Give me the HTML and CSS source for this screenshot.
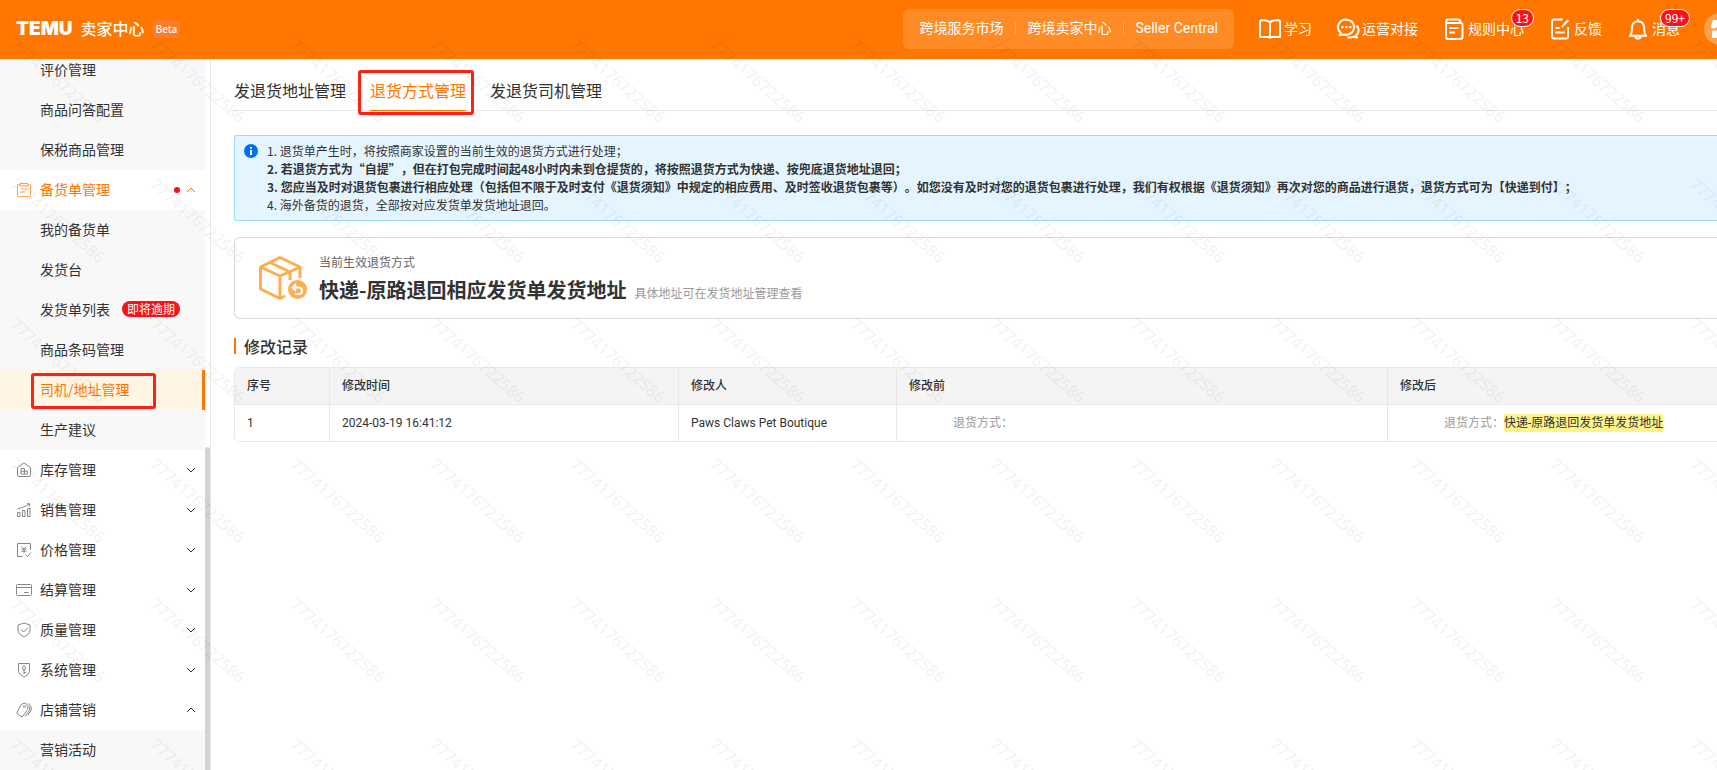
FILE: index.html
```html
<!DOCTYPE html>
<html lang="zh-CN">
<head>
<meta charset="utf-8">
<meta name="viewport" content="width=device-width, initial-scale=1">
<title>TEMU 卖家中心</title>
<link rel="stylesheet" href="styles.css">
</head>
<body>
<header class="topbar">
  <a class="brand" href="#">
    <span class="brand-logo">TEMU</span>
    <span class="brand-name">卖家中心</span>
    <span class="brand-beta">Beta</span>
  </a>
  <div class="topbar-right">
    <nav class="sites">
      <a href="#">跨境服务市场</a>
      <a href="#">跨境卖家中心</a>
      <a href="#">Seller Central</a>
    </nav>
    <a class="tool" href="#">
      <svg class="tool-icon" viewBox="0 0 24 24"><path d="M12 5.500C10.800 4 9 3.200 6.500 3.200H3.500Q2 3.200 2 4.700V20H9.500Q11.500 20 12 20.800Q12.500 20 14.500 20H22V4.700Q22 3.200 20.500 3.200H17.500C15 3.200 13.200 4 12 5.500ZM12 5.500V20.500"/></svg>
      <span>学习</span>
    </a>
    <a class="tool" href="#">
      <svg class="tool-icon" viewBox="0 0 24 24"><path d="M10.300 2.500A8.300 7.600 0 0 0 4.800 15.800L3.500 18.200L8 17.500A8.300 7.600 0 1 0 10.300 2.500ZM20.500 8.500A6.300 6.300 0 0 1 20 18.400L21 20.600L17.500 19.700A8 7 0 0 1 11.500 20.300"/><path class="solid" d="M5.300 9h2.200v2.200H5.300zM9.200 9h2.200v2.200H9.200zM13.100 9h2.200v2.200h-2.200z"/></svg>
      <span>运营对接</span>
    </a>
    <a class="tool" href="#">
      <svg class="tool-icon" viewBox="0 0 24 24"><path d="M4 5V20Q4 22 6 22H18Q20.500 22 20.500 20V8Q20.500 6 18.500 6H6Q4 6 4 4.500Q4 2.500 6 2.500H16.500Q18.500 2.500 18.500 6M7.500 11H16.500M7.500 15.500H13"/></svg>
      <span>规则中心</span>
      <span class="count">13</span>
    </a>
    <a class="tool" href="#">
      <svg class="tool-icon" viewBox="0 0 24 24"><path d="M14.500 2.500H6Q4 2.500 4 4.500V19.500Q4 21.500 6 21.500H18Q20 21.500 20 19.500V10M20.500 3L13.500 10M7.500 11H11.500M7.500 15.500H16.500"/></svg>
      <span>反馈</span>
    </a>
    <a class="tool" href="#">
      <svg class="tool-icon" viewBox="0 0 24 24"><path d="M12 2V4M3 18.700H21M4.500 18.500Q5.800 16.500 5.800 11Q6.300 4.200 12 4.200Q17.700 4.200 18.200 11Q18.200 16.500 19.500 18.500M9 19.500Q10 21.800 12 21.800Q14 21.800 15 19.500"/></svg>
      <span>消息</span>
      <span class="count">99+</span>
    </a>
    <a class="avatar" href="#" aria-label="店铺">
      <svg viewBox="0 0 20 20"><path d="M3 1H17L19 7Q19 9.500 16.500 9.500Q14.500 9.500 13.500 8Q12.500 9.500 10 9.500Q7.500 9.500 6.500 8Q5.500 9.500 3.500 9.500Q1 9.500 1 7ZM2 11.500H18V19H12V15H8V19H2Z"/></svg>
    </a>
  </div>
</header>

<div class="shell">
  <aside class="sidebar">
    <nav class="menu">
      <ul class="submenu">
        <li><a href="#">评价管理</a></li>
        <li><a href="#">商品问答配置</a></li>
        <li><a href="#">保税商品管理</a></li>
      </ul>
      <button class="group current" type="button">
        <svg class="group-icon" viewBox="0 0 16 16"><path d="M4 2.500H2.500Q1.500 2.500 1.500 3.500V13.500Q1.500 14.500 2.500 14.500H13.500Q14.500 14.500 14.500 13.500V3.500Q14.500 2.500 13.500 2.500H12M4 1.500H12V4H4ZM4.500 7H11.500M4.500 10H9"/></svg>
        <span>备货单管理</span>
        <i class="dot"></i>
        <svg class="chevron" viewBox="0 0 10 10"><path d="M1 7L5 3L9 7"/></svg>
      </button>
      <ul class="submenu">
        <li><a href="#">我的备货单</a></li>
        <li><a href="#">发货台</a></li>
        <li><a href="#">发货单列表<span class="due">即将逾期</span></a></li>
        <li><a href="#">商品条码管理</a></li>
        <li><a class="selected" href="#">司机/地址管理</a></li>
        <li><a href="#">生产建议</a></li>
      </ul>
      <button class="group" type="button">
        <svg class="group-icon" viewBox="0 0 16 16"><path d="M1.500 5.500L8 1L14.500 5.500V13Q14.500 14.500 13 14.500H3Q1.500 14.500 1.500 13ZM5 12V6.500H8.500V12M5 9.200H11.500V12H5M8.500 9.200V12"/></svg>
        <span>库存管理</span>
        <svg class="chevron" viewBox="0 0 10 10"><path d="M1 3L5 7L9 3"/></svg>
      </button>
      <button class="group" type="button">
        <svg class="group-icon" viewBox="0 0 16 16"><path d="M1.500 10.500H4V14.500H1.500ZM6.500 8.500H9V14.500H6.500ZM11.500 6.500H14V14.500H11.500ZM1.500 7Q8 5.500 13.500 2M11 1.500L14 2L13 4.500"/></svg>
        <span>销售管理</span>
        <svg class="chevron" viewBox="0 0 10 10"><path d="M1 3L5 7L9 3"/></svg>
      </button>
      <button class="group" type="button">
        <svg class="group-icon" viewBox="0 0 16 16"><path d="M6.500 14.500H1.500V1.500H14.500V8M9.500 12.500L11.500 14.500L15 10.500M5.500 4.500L8 7L10.500 4.500M5.500 7.300H10.500M5.500 9.300H10.500M8 7V11"/></svg>
        <span>价格管理</span>
        <svg class="chevron" viewBox="0 0 10 10"><path d="M1 3L5 7L9 3"/></svg>
      </button>
      <button class="group" type="button">
        <svg class="group-icon" viewBox="0 0 16 16"><path d="M1.500 2.500H14.500Q15.500 2.500 15.500 3.500V12.500Q15.500 13.500 14.500 13.500H1.500Q.5 13.500 .5 12.500V3.500Q.5 2.500 1.500 2.500ZM.5 5.500H15.500M8 10.500H12.500"/></svg>
        <span>结算管理</span>
        <svg class="chevron" viewBox="0 0 10 10"><path d="M1 3L5 7L9 3"/></svg>
      </button>
      <button class="group" type="button">
        <svg class="group-icon" viewBox="0 0 16 16"><path d="M8 1L14 3V9Q13.500 12.500 8 15Q2.500 12.500 2 9V3ZM5 7.500L7.500 10L11.500 6"/></svg>
        <span>质量管理</span>
        <svg class="chevron" viewBox="0 0 10 10"><path d="M1 3L5 7L9 3"/></svg>
      </button>
      <button class="group" type="button">
        <svg class="group-icon" viewBox="0 0 16 16"><path d="M2.500 1.500H13.500V9.500Q13 12.500 8 15Q3 12.500 2.500 9.500ZM8 7.500V12M8 10.500H10"/><circle cx="8" cy="5.800" r="1.700"/></svg>
        <span>系统管理</span>
        <svg class="chevron" viewBox="0 0 10 10"><path d="M1 3L5 7L9 3"/></svg>
      </button>
      <button class="group" type="button">
        <svg class="group-icon" viewBox="0 0 16 16"><path d="M5 2.500L9 1L12 3.500L11.500 7.500L7 14Q6 15 5 14.300L1.500 12Q.5 11 1.300 10ZM12.500 1.500L14 3.500L13.500 8.500L9 14.500M15 4.500L15.200 8L11.500 13.500"/><circle cx="8.500" cy="4.500" r="1"/></svg>
        <span>店铺营销</span>
        <svg class="chevron" viewBox="0 0 10 10"><path d="M1 7L5 3L9 7"/></svg>
      </button>
      <ul class="submenu">
        <li><a href="#">营销活动</a></li>
      </ul>
    </nav>
    <div class="scroll-track"><div class="scroll-thumb"></div></div>
  </aside>

  <main class="content">
    <nav class="tabs">
      <a href="#">发退货地址管理</a>
      <a class="active" href="#">退货方式管理</a>
      <a href="#">发退货司机管理</a>
    </nav>

    <section class="notice">
      <svg class="notice-icon" viewBox="0 0 14 14"><circle cx="7" cy="7" r="7"/><path d="M6 3H8V4.700H6ZM6 6H8V11H6Z"/></svg>
      <div class="notice-text">
        <p>1. 退货单产生时，将按照商家设置的当前生效的退货方式进行处理；</p>
        <p><strong>2. 若退货方式为“自提”，但在打包完成时间起48小时内未到仓提货的，将按照退货方式为快递、按兜底退货地址退回；</strong></p>
        <p><strong>3. 您应当及时对退货包裹进行相应处理（包括但不限于及时支付《退货须知》中规定的相应费用、及时签收退货包裹等）。如您没有及时对您的退货包裹进行处理，我们有权根据《退货须知》再次对您的商品进行退货，退货方式可为【快递到付】；</strong></p>
        <p>4. 海外备货的退货，全部按对应发货单发货地址退回。</p>
      </div>
    </section>

    <section class="method">
      <svg class="method-icon" viewBox="0 0 48 44"><g fill="none" stroke="#ffad4f" stroke-width="3" stroke-linejoin="round"><path d="M41 22V11L21 1.500L1.500 11V33L21 42.500L26 40M1.500 11L21 20L41 11M21 20V42M11 6.500L31 16V24"/></g><circle cx="38.500" cy="33.500" r="9.500" fill="#ffad4f"/><path d="M37 28L33.500 31.500L37 35M34 31.500H40Q43 31.500 43 35Q43 38 40 38H36" fill="none" stroke="#fff" stroke-width="2"/></svg>
      <div class="method-info">
        <p class="method-label">当前生效退货方式</p>
        <div class="method-line">
          <h2>快递-原路退回相应发货单发货地址</h2>
          <span>具体地址可在发货地址管理查看</span>
        </div>
      </div>
    </section>

    <h3 class="section-title">修改记录</h3>
    <table class="records">
      <colgroup><col class="c-index"><col class="c-time"><col class="c-user"><col class="c-before"><col></colgroup>
      <thead>
        <tr><th>序号</th><th>修改时间</th><th>修改人</th><th>修改前</th><th>修改后</th></tr>
      </thead>
      <tbody>
        <tr>
          <td>1</td>
          <td>2024-03-19 16:41:12</td>
          <td>Paws Claws Pet Boutique</td>
          <td class="change"><span>退货方式：</span></td>
          <td class="change"><span>退货方式：</span><mark>快递-原路退回发货单发货地址</mark></td>
        </tr>
      </tbody>
    </table>
  </main>
</div>

<svg class="watermark" aria-hidden="true">
  <defs>
    <pattern id="mark" width="140" height="140" patternUnits="userSpaceOnUse">
      <text x="0" y="0" transform="translate(9 46) rotate(41)">7774176722586</text>
    </pattern>
  </defs>
  <rect width="100%" height="100%" fill="url(#mark)"/>
</svg>
</body>
</html>
```

FILE: styles.css
```css
* { box-sizing: border-box; }

body {
  margin: 0;
  height: 100vh;
  display: flex;
  flex-direction: column;
  overflow: hidden;
  background: #fff;
  color: #333;
  font: 14px/20px "Noto Sans CJK SC", "Noto Sans", sans-serif;
  text-spacing-trim: space-all;
}

a { color: inherit; text-decoration: none; }
p, h2, h3, ul { margin: 0; padding: 0; }
ul { list-style: none; }

/* Top bar */
.topbar {
  flex: none;
  display: flex;
  align-items: center;
  justify-content: space-between;
  height: 59px;
  padding-left: 16px;
  padding-bottom: 1px;
  background: #ff7700;
  color: #fff;
  white-space: nowrap;
}
.brand { display: flex; align-items: center; }
.brand-logo { font: 900 19px/24px Inter, sans-serif; }
.brand-name { margin-left: 8px; padding-bottom: 2px; font-size: 16px; font-weight: 500; line-height: 24px; }
.brand-beta {
  margin-left: 8px;
  padding: 0 3px;
  border-radius: 3px;
  background: #ff7a26;
  font-size: 10px;
  font-weight: 500;
  line-height: 18px;
}
.topbar-right { display: flex; align-items: center; gap: 24px; margin-right: -19px; }
.sites {
  display: flex;
  align-items: center;
  padding: 9px 4px 11px;
  border-radius: 6px;
  background: rgba(255, 255, 255, 0.15);
  font-family: Roboto, "Noto Sans CJK SC", sans-serif;
}
.sites a { padding: 0 12px; }
.sites a + a { background: linear-gradient(rgba(255, 255, 255, 0.25), rgba(255, 255, 255, 0.25)) left center / 1px 12px no-repeat; }
.tool { position: relative; display: flex; align-items: center; gap: 2px; }
.tool span { padding-bottom: 2px; }
.tool-icon { width: 24px; height: 24px; fill: none; stroke: #fff; stroke-width: 2; stroke-linejoin: round; }
.tool-icon .solid { fill: #fff; stroke: none; }
.tool .count {
  position: absolute;
  right: -10px;
  top: -8px;
  padding: 0 4px;
  border: 1px solid #fff;
  border-radius: 9px;
  background: #fa1119;
  font-size: 12px;
  line-height: 16px;
}
.avatar {
  display: flex;
  align-items: center;
  justify-content: center;
  width: 32px;
  height: 32px;
  border-radius: 50%;
  background: rgba(255, 255, 255, 0.3);
}
.avatar svg { width: 20px; height: 20px; fill: #fff; }

/* Sidebar */
.shell { flex: 1; display: flex; min-height: 0; }
.sidebar {
  flex: none;
  display: flex;
  width: 211px;
  border-right: 1px solid #e8e8e8;
  overflow: hidden;
}
.menu { flex: 1; margin-top: -9px; }
.submenu { background: #f8f8f8; }
.submenu a { display: flex; align-items: center; gap: 12px; height: 40px; padding: 0 0 2px 40px; }
.submenu .selected {
  position: relative;
  border-right: 3px solid #ff7700;
  background: #fff5e5;
  color: #ff7700;
}
.selected::after {
  content: "";
  position: absolute;
  inset: 3px 46px 1px 31px;
  border: 3px solid #fd2117;
  border-radius: 3px;
}
.due { padding: 0 5px; border-radius: 8px; background: #fa1119; color: #fff; font-size: 12px; line-height: 16px; }
.group {
  display: flex;
  align-items: center;
  width: 100%;
  height: 40px;
  padding: 0 9px 0 16px;
  border: 0;
  background: #fff;
  color: #333;
  font: inherit;
}
.group span { padding-bottom: 2px; }
.group-icon { width: 16px; height: 16px; margin-right: 8px; fill: none; stroke: #888; stroke-width: 1; }
.group .chevron { width: 10px; height: 10px; margin-left: auto; fill: none; stroke: #333; stroke-width: 1; }
.group.current { color: #ff7700; }
.current .group-icon { stroke: #ffa04d; }
.current .chevron { margin-left: 6px; stroke: #ff7700; }
.dot { width: 6px; height: 6px; margin-left: auto; border-radius: 50%; background: #fa1119; }
.scroll-track { display: flex; flex-direction: column; justify-content: flex-end; width: 5px; }
.scroll-thumb { height: 45.5%; border-radius: 3px 3px 0 0; background: #d3d3d3; }

/* Main column; its boxes run on past the right edge of the window */
.content { flex: 1; min-width: 0; padding-left: 23px; }
.tabs {
  display: flex;
  gap: 24px;
  padding-top: 19px;
  border-bottom: 1px solid #e8e8e8;
  font-size: 16px;
  line-height: 24px;
}
.tabs a { margin-bottom: -1px; padding-bottom: 8px; border-bottom: 1px solid transparent; }
.tabs .active { position: relative; border-color: #ff7700; color: #ff7700; }
.active::after {
  content: "";
  position: absolute;
  inset: -8px -8px -5px -12px;
  border: 3px solid #fd2117;
  border-radius: 3px;
}
.notice {
  display: flex;
  gap: 9px;
  margin-top: 24px;
  padding: 6px 0 6px 9px;
  border: 1px solid #9fd8ff;
  border-right: 0;
  border-radius: 3px 0 0 3px;
  background: #e5f5ff;
  font-size: 12px;
  line-height: 18px;
  white-space: nowrap;
}
.notice-icon { flex: none; width: 14px; height: 14px; margin-top: 2px; fill: #0071f3; }
.notice-icon path { fill: #fff; }
.method {
  display: flex;
  align-items: center;
  gap: 12px;
  margin-top: 16px;
  padding: 14px 24px;
  border: 1px solid #d9d9d9;
  border-right: 0;
  border-radius: 6px 0 0 6px;
}
.method-icon { width: 48px; height: 44px; }
.method-label { margin-bottom: 4px; color: #666; font-size: 12px; }
.method-line { display: flex; align-items: baseline; gap: 8px; }
.method-line h2 { font-size: 20px; font-weight: 700; line-height: 28px; }
.method-line span { color: #999; font-size: 12px; }
.section-title {
  margin: 15px 0 9px;
  padding-left: 10px;
  background: linear-gradient(#ff7700, #ff7700) left center / 2px 16px no-repeat;
  font-size: 16px;
  font-weight: 500;
  line-height: 24px;
}
.records {
  width: 100%;
  border: 1px solid #e8e8e8;
  border-width: 1px 0 0 1px;
  border-radius: 6px 0 0 6px;
  border-collapse: separate;
  border-spacing: 0;
  table-layout: fixed;
  font: 12px/18px Roboto, "Noto Sans CJK SC", sans-serif;
  overflow: hidden;
}
.c-index { width: 95px; }
.c-time { width: 349px; }
.c-user { width: 218px; }
.c-before { width: 491px; }
.records th, .records td {
  padding: 9px 12px;
  border: 0 solid #e8e8e8;
  border-width: 0 1px 1px 0;
  text-align: left;
}
.records th { background: #f4f4f4; font-weight: 500; }
.records th:last-child, .records td:last-child { border-right: 0; }
.records .change { padding-left: 56px; }
.change span { color: #999; }
.change mark { display: inline-block; background: #fff48c; color: #333; }

/* Account number repeated over the whole page */
.watermark { position: fixed; inset: 0; width: 100%; height: 100%; pointer-events: none; }
.watermark text { font: 16px "Noto Sans", sans-serif; fill: rgba(0, 0, 0, 0.05); }
```
